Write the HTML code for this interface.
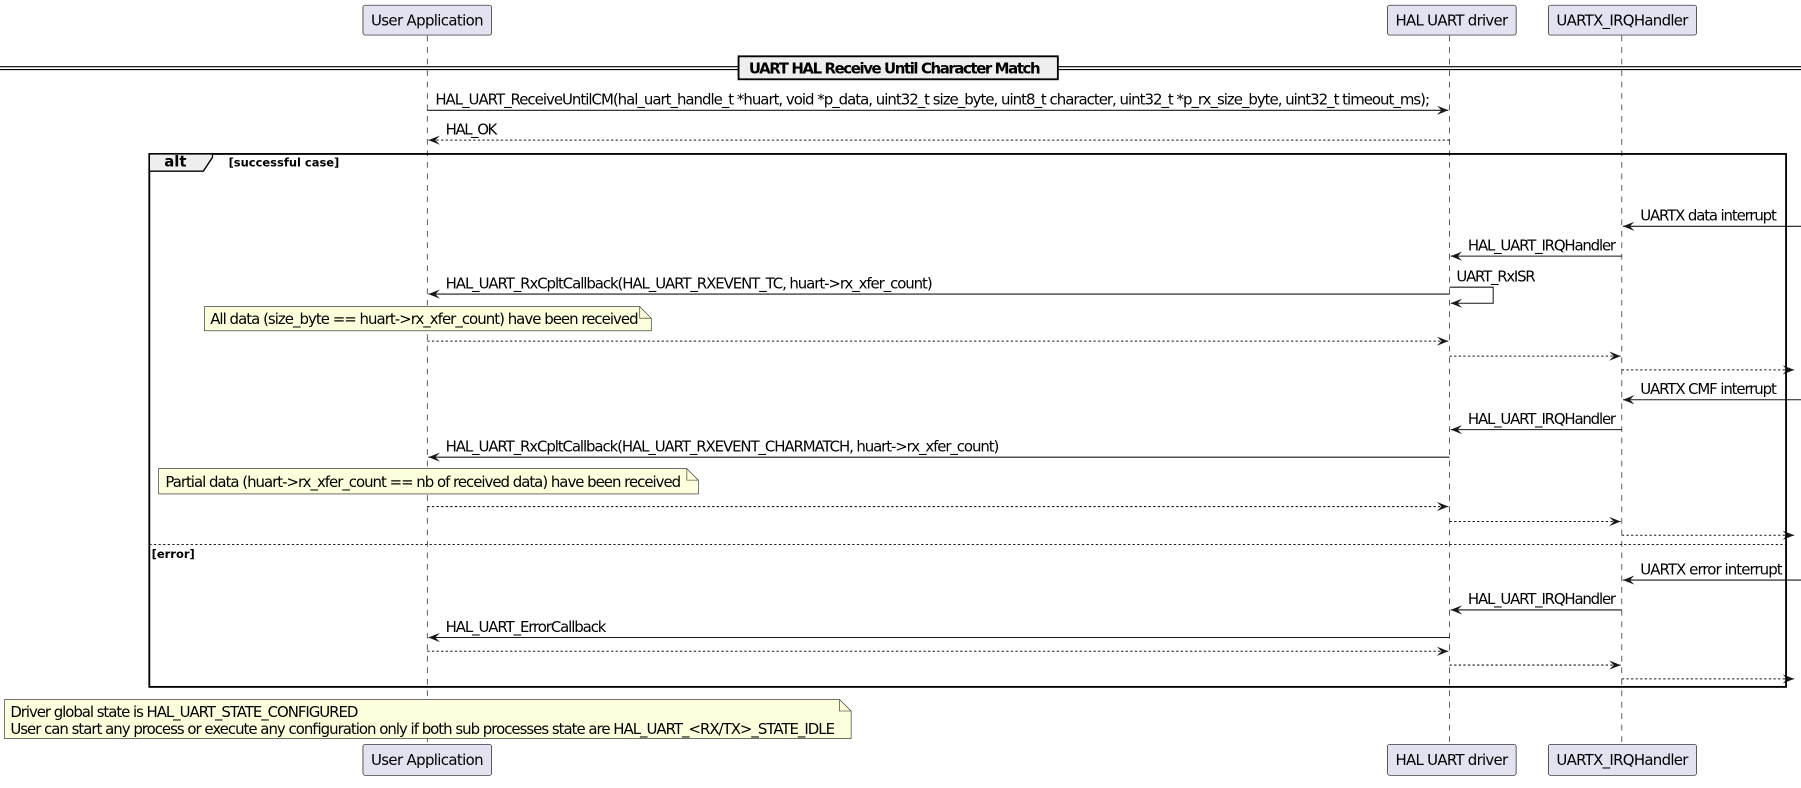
<!DOCTYPE html>
<html><head><meta charset="utf-8"><style>
html,body{margin:0;padding:0;background:#fff;}
svg{display:block;}
text{font-family:"DejaVu Sans","Liberation Sans",sans-serif;font-size:13px;fill:#000;}
.b{font-weight:bold;}
.s{font-size:10px;font-weight:bold;}
</style></head><body>
<svg width="1801" height="788" viewBox="0 0 1568 686" xmlns="http://www.w3.org/2000/svg">
<defs>
<marker id="ah" markerWidth="12" markerHeight="10" refX="10" refY="5" orient="auto" markerUnits="userSpaceOnUse">
<polygon points="0,1 10,5 0,9 4,5" fill="#181818"/>
</marker>
</defs>
<g stroke="#181818" stroke-width="0.6" stroke-dasharray="5,5">
<line x1="372" y1="31" x2="372" y2="648"/>
<line x1="1262" y1="31" x2="1262" y2="648"/>
<line x1="1412" y1="31" x2="1412" y2="648"/>
</g>
<g fill="#E2E2F0" stroke="#181818" stroke-width="0.6">
<rect x="316" y="4.5" width="112" height="26" rx="2"/>
<rect x="1208" y="4.5" width="112" height="26" rx="2"/>
<rect x="1348" y="4.5" width="129" height="26" rx="2"/>
<rect x="316" y="648" width="112" height="27" rx="2"/>
<rect x="1208" y="648" width="112" height="27" rx="2"/>
<rect x="1348" y="648" width="129" height="27" rx="2"/>
</g>
<text x="323" y="22" textLength="98">User Application</text>
<text x="1215" y="22" textLength="98">HAL UART driver</text>
<text x="1355" y="22" textLength="115">UARTX_IRQHandler</text>
<text x="323" y="666" textLength="98">User Application</text>
<text x="1215" y="666" textLength="98">HAL UART driver</text>
<text x="1355" y="666" textLength="115">UARTX_IRQHandler</text>
<line x1="0" y1="58" x2="1568" y2="58" stroke="#000" stroke-width="1"/>
<line x1="0" y1="60.5" x2="1568" y2="60.5" stroke="#000" stroke-width="1"/>
<rect x="643" y="49" width="278" height="20" fill="#EEEEEE" stroke="#000" stroke-width="1.6"/>
<text class="b" x="652" y="64" textLength="254">UART HAL Receive Until Character Match</text>
<g stroke="#181818" stroke-width="0.9" fill="none">
<line x1="372" y1="96" x2="1261" y2="96" marker-end="url(#ah)"/>
<line x1="1262" y1="122" x2="373" y2="122" stroke-dasharray="2,2" marker-end="url(#ah)"/>
<line x1="1568" y1="197" x2="1413" y2="197" marker-end="url(#ah)"/>
<line x1="1412" y1="223" x2="1263" y2="223" marker-end="url(#ah)"/>
<polyline points="1262,250 1300,250 1300,264 1263,264" marker-end="url(#ah)"/>
<line x1="1262" y1="256" x2="373" y2="256" marker-end="url(#ah)"/>
<line x1="372" y1="297" x2="1261" y2="297" stroke-dasharray="2,2" marker-end="url(#ah)"/>
<line x1="1262" y1="310" x2="1411" y2="310" stroke-dasharray="2,2" marker-end="url(#ah)"/>
<line x1="1412" y1="322" x2="1562" y2="322" stroke-dasharray="2,2" marker-end="url(#ah)"/>
<line x1="1568" y1="348" x2="1413" y2="348" marker-end="url(#ah)"/>
<line x1="1412" y1="374" x2="1263" y2="374" marker-end="url(#ah)"/>
<line x1="1262" y1="398" x2="373" y2="398" marker-end="url(#ah)"/>
<line x1="372" y1="441" x2="1261" y2="441" stroke-dasharray="2,2" marker-end="url(#ah)"/>
<line x1="1262" y1="454" x2="1411" y2="454" stroke-dasharray="2,2" marker-end="url(#ah)"/>
<line x1="1412" y1="466" x2="1562" y2="466" stroke-dasharray="2,2" marker-end="url(#ah)"/>
<line x1="1568" y1="505" x2="1413" y2="505" marker-end="url(#ah)"/>
<line x1="1412" y1="531" x2="1263" y2="531" marker-end="url(#ah)"/>
<line x1="1262" y1="555" x2="373" y2="555" marker-end="url(#ah)"/>
<line x1="372" y1="567" x2="1261" y2="567" stroke-dasharray="2,2" marker-end="url(#ah)"/>
<line x1="1262" y1="579" x2="1411" y2="579" stroke-dasharray="2,2" marker-end="url(#ah)"/>
<line x1="1412" y1="591" x2="1562" y2="591" stroke-dasharray="2,2" marker-end="url(#ah)"/>
</g>
<text x="379" y="91" textLength="866">HAL_UART_ReceiveUntilCM(hal_uart_handle_t *huart, void *p_data, uint32_t size_byte, uint8_t character, uint32_t *p_rx_size_byte, uint32_t timeout_ms);</text>
<text x="388" y="117" textLength="45">HAL_OK</text>
<text x="1428" y="192" textLength="119">UARTX data interrupt</text>
<text x="1278" y="218" textLength="129">HAL_UART_IRQHandler</text>
<text x="1268" y="245" textLength="69">UART_RxISR</text>
<text x="388" y="251" textLength="424">HAL_UART_RxCpltCallback(HAL_UART_RXEVENT_TC, huart-&gt;rx_xfer_count)</text>
<text x="1428" y="343" textLength="119">UARTX CMF interrupt</text>
<text x="1278" y="369" textLength="129">HAL_UART_IRQHandler</text>
<text x="388" y="393" textLength="482">HAL_UART_RxCpltCallback(HAL_UART_RXEVENT_CHARMATCH, huart-&gt;rx_xfer_count)</text>
<text x="1428" y="500" textLength="124">UARTX error interrupt</text>
<text x="1278" y="526" textLength="129">HAL_UART_IRQHandler</text>
<text x="388" y="550" textLength="140">HAL_UART_ErrorCallback</text>
<g fill="#FEFFDD" stroke="#181818" stroke-width="0.5">
<path d="M178,267 H557 L567,277 V288 H178 Z"/>
<path d="M557,267 V277 H567" fill="none"/>
<path d="M138,408 H598 L608,418 V430 H138 Z"/>
<path d="M598,408 V418 H608" fill="none"/>
<path d="M4,609 H731 L741,619 V643 H4 Z"/>
<path d="M731,609 V619 H741" fill="none"/>
</g>
<text x="183" y="282" textLength="373">All data (size_byte == huart-&gt;rx_xfer_count) have been received</text>
<text x="144" y="424" textLength="449">Partial data (huart-&gt;rx_xfer_count == nb of received data) have been received</text>
<text x="9" y="624" textLength="303">Driver global state is HAL_UART_STATE_CONFIGURED</text>
<text x="9" y="639" textLength="718">User can start any process or execute any configuration only if both sub processes state are HAL_UART_&lt;RX/TX&gt;_STATE_IDLE</text>
<rect x="130" y="134" width="1425" height="464" fill="none" stroke="#000" stroke-width="1.6"/>
<path d="M130,134 H185 V137 L177,149 H130 Z" fill="#EEEEEE" stroke="#000" stroke-width="1.2"/>
<text class="b" x="143" y="145" font-size="12">alt</text>
<text class="s" x="199" y="145">[successful case]</text>
<line x1="130" y1="474" x2="1555" y2="474" stroke="#000" stroke-width="0.8" stroke-dasharray="2,2"/>
<text class="s" x="132" y="486">[error]</text>
</svg>
</body></html>
